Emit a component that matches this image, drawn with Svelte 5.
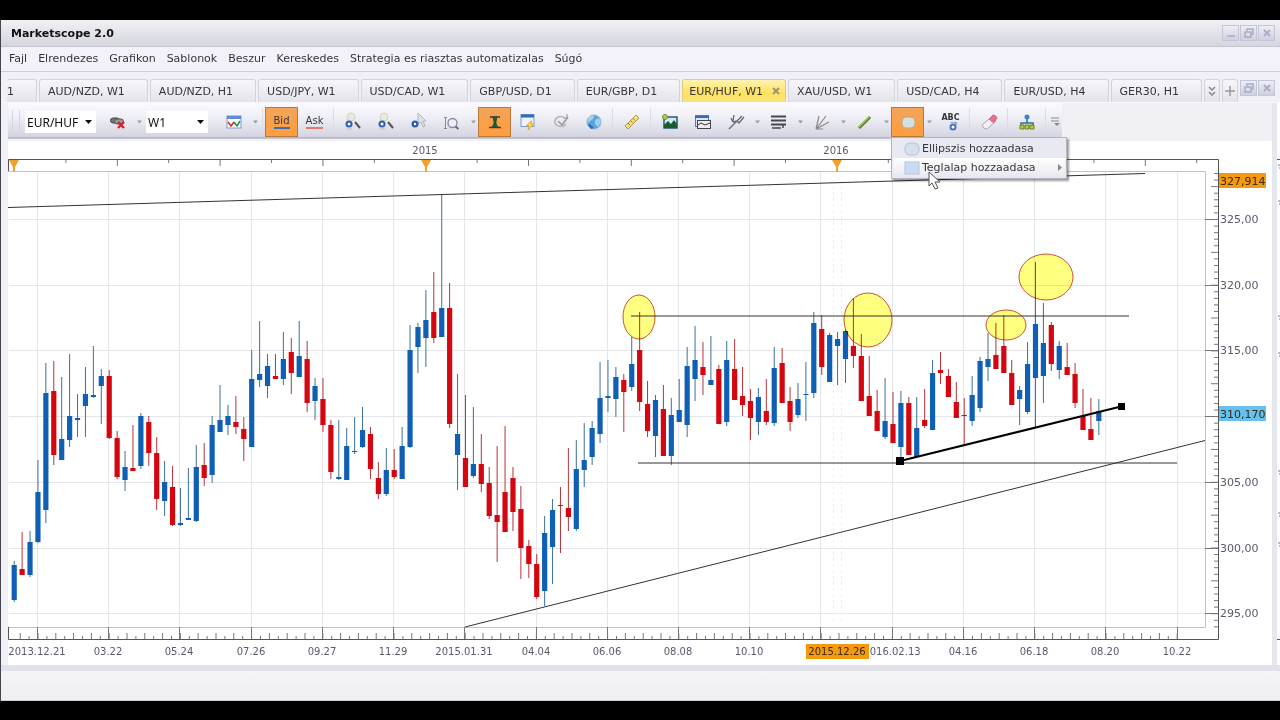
<script>
	let symbol = $state('EUR/HUF');
	let period = $state('W1');
	let activeTab = $state('EUR/HUF, W1');

	const menu = ['Fajl', 'Elrendezes', 'Grafikon', 'Sablonok', 'Beszur', 'Kereskedes', 'Strategia es riasztas automatizalas', 'Súgó'];

	const tabs = [
		'AUD/NZD, W1', 'AUD/NZD, H1', 'USD/JPY, W1', 'USD/CAD, W1', 'GBP/USD, D1', 'EUR/GBP, D1',
		'EUR/HUF, W1', 'XAU/USD, W1', 'USD/CAD, H4', 'EUR/USD, H4', 'GER30, H1'
	];

	// icon shapes, all on a 20x20 grid
	const icons = {
		link: '<rect x="2.500" y="6" width="9" height="5" rx="2.500" fill="#777" stroke="#444"/><rect x="6.500" y="7" width="9" height="5" rx="2.500" fill="#999" stroke="#555"/><path d="M10 10l6 6M16 10l-6 6" stroke="#d8202c" stroke-width="2.400"/>',
		chart: '<rect x="3" y="4" width="14" height="12" fill="#fff" stroke="#7d9cc8"/><path d="M3 5.500h14" stroke="#5f8cd0" stroke-width="3"/><path d="M4 10l3 4 3-4" fill="none" stroke="#d22" stroke-width="1.500"/><path d="M10 10l3 4 3-5" fill="none" stroke="#285" stroke-width="1.500"/>',
		zoomA: '<circle cx="8" cy="5" r="4" fill="#ece8d8" stroke="#d4d2cc"/><path d="M12 10l5 6" stroke="#555" stroke-width="2"/><circle cx="6" cy="12" r="3.500" fill="#2f5fae"/><circle cx="6" cy="12" r="1.500" fill="#fff"/><path d="M4 17h5" stroke="#b4c4d4"/>',
		pointer: '<path d="M9 1v11l3-2 2 5 2-1-2-5h3z" fill="#dde2ea" stroke="#b4b4ba"/><circle cx="6" cy="12" r="3.500" fill="#2f5fae"/><circle cx="6" cy="12" r="1.200" fill="#fff"/>',
		range: '<path d="M3.500 5v12M2 5.500h3M2 16.500h3" stroke="#888"/><circle cx="10.500" cy="11" r="4.500" fill="#eef" stroke="#889" stroke-width="1.300"/><path d="M13.500 14.500l3 2.500" stroke="#667" stroke-width="2"/>',
		scale: '<path d="M5 5h10M4 15.500h12" stroke="#532" stroke-width="1.500"/><path d="M8 5h4l-1 4v3l2 3H7l2-3V9z" fill="#2c7a42" stroke="#264f30"/><path d="M10 5v10" stroke="#143"/>',
		windowStar: '<rect x="3" y="2.500" width="13" height="12" fill="#eef4fc" stroke="#7d9cc8"/><path d="M3 4h13" stroke="#2f6cc0" stroke-width="3"/><path d="M13 9l-5 5h3l-1 4 6-6h-3l1-3z" fill="#ffd24a" stroke="#d8962a" stroke-width=".7"/>',
		refresh: '<path d="M15 12a6 5 0 1 1-1-6M16 2v4h-4" fill="none" stroke="#b5b5ba" stroke-width="1.600"/><path d="M7 9l4 4 6-8" fill="none" stroke="#9a9aa0" stroke-width="1.600"/>',
		globe: '<circle cx="10" cy="10" r="7" fill="#5aa5dc" stroke="#8ab4d6"/><path d="M4 6c2-3 5-3 6-2l-1 3-3 2-2 2zM11 8l4-2 2 4-3 5-3-3z" fill="#a5d0ea"/><path d="M6 12l4 4-3 1-3-4z" fill="#2c6eb8"/>',
		ruler: '<path d="M3 14L14 3l3 3L6 17z" fill="#f5dc7c" stroke="#b39b51"/><path d="M6 11l2 2M8.500 8.500l2 2M11 6.500l2 2" stroke="#93732b"/>',
		picture: '<rect x="4" y="5" width="13" height="11" fill="#cfeaf8" stroke="#1c4e6b" stroke-width="1.400"/><path d="M4 13l4-4 3 3 3-4 3 4v4H4z" fill="#1b5c2d"/><circle cx="5" cy="5" r="2.500" fill="#b5c64c" stroke="#7a902b"/>',
		windows: '<rect x="2.500" y="3.500" width="13" height="11" fill="#dce8fa" stroke="#5377b8"/><path d="M2 5h14" stroke="#3b67b8" stroke-width="2"/><rect x="4.500" y="8.500" width="13" height="8" fill="#eee" stroke="#445"/><path d="M5 13l3-2 4 2 5-2" fill="none" stroke="#334"/>',
		fork: '<path d="M3 17l8-8M5 6l2 4 4-1 5-5M8 3l-1 6M11 9l2 2 5-6" fill="none" stroke="#667" stroke-width="1.300"/>',
		lines: '<path d="M2 4.500h15M2 8.500h15M2 12.500h15" stroke="#454850" stroke-width="2"/><path d="M3 16h9M14 16V12" stroke="#454850" stroke-width="1.500"/>',
		fan: '<path d="M4 17L7 4M4 17L14 4M4 17l13-7M4 17h7" fill="none" stroke="#888" stroke-width="1.200"/>',
		line: '<path d="M4 16L15 5" stroke="#587a2b" stroke-width="3"/><path d="M4 15L14 5" stroke="#a9d046" stroke-width="1.200"/>',
		ellipse: '<rect x="4" y="5" width="13" height="11" rx="4.500" fill="#d5e0dc" stroke="#b6a98c"/>',
		eraser: '<path d="M3 13l7-6 5 4-7 6q-3 1-5-4z" fill="#f3f1f5" stroke="#aaa"/><path d="M10 7l4-4q3 0 4 3l-3 5z" fill="#e8708c" stroke="#d0708a"/>',
		tree: '<path d="M10 6v5M4 15v-4h12v4" fill="none" stroke="#2d6f9e" stroke-width="1.500"/><circle cx="10" cy="5" r="2.500" fill="#3785c7"/><path d="M3 13h4v4H3zM8 13h4v4H8zM13 13h4v4h-4z" fill="#b7cc35" stroke="#64822a"/>'
	};

	// icon name, '>' for a drop arrow, '|' for a separator
	const tools = [
		'chart', '>', '|', 'bid', 'ask', '|', 'zoomA', 'zoomA', 'pointer', 'range', '>', 'scale', 'windowStar',
		'refresh', 'globe', '|', 'ruler', '|', 'picture', 'windows', 'fork', '>', 'lines', '>', 'fan', '>',
		'line', '>', 'ellipse', '>', 'text', '|', 'eraser', '|', 'tree', '|'
	];

	const STEP = 7.917;
	const candleX = (i) => 14.2 + i * STEP;

	// high, body top, body bottom, low, u = rising / d = falling
	const candles = `561 565 600 602 u|532 569 575 575 d|531 542 575 577 u|460 492 542 543 u|363 393 510 523 u|361 391 455 465 d
377 439 460 460 u|354 416 440 447 u|394 418 420 437 u|367 394 406 437 u|346 395 397 398 u|369 376 386 424 u|370 376 438 439 d
431 438 477 479 d|451 467 480 491 u|425 468 471 471 d|413 416 466 469 u|416 422 453 466 d|437 453 499 510 d|461 482 501 516 u
466 487 525 526 d|488 523 525 526 u|468 518 520 520 u|445 467 521 522 u|443 465 478 486 d|416 425 475 483 u|385 420 432 432 u
405 416 425 435 u|396 422 427 434 d|417 429 439 461 d|350 379 447 447 u|321 374 380 387 u|354 366 386 398 u|354 376 379 379 d
332 359 379 385 u|338 352 373 394 d|321 356 377 377 u|341 359 403 412 d|378 386 401 420 u|378 399 425 432 d|420 425 472 479 d
420 477 479 480 u|428 446 480 480 u|417 451 452 454 u|407 430 447 448 u|427 434 469 479 d|462 478 494 499 d|448 470 494 496 u
449 470 477 479 d|427 446 479 479 u|325 350 447 448 u|323 327 347 373 u|290 320 338 367 u|272 312 338 343 d|194 308 337 337 u
283 308 424 428 d|374 434 455 490 u|395 458 487 487 d|407 464 476 478 u|434 464 484 492 d|467 483 516 519 d|446 515 522 562 d
426 492 532 532 d|467 478 512 531 d|486 509 548 579 d|540 546 564 578 d|554 564 597 599 d|516 533 591 606 u|499 510 547 584 u
487 505 506 553 d|448 508 517 531 d|440 469 529 531 u|423 460 470 487 u|421 428 457 465 u|362 398 434 443 u|360 396 398 412 u
367 377 399 417 u|374 380 392 432 d|337 364 387 391 u|312 350 402 411 d|381 404 431 437 d|395 400 436 457 u|385 409 456 456 d
398 415 456 465 u|379 410 422 422 u|347 366 425 437 u|326 360 379 401 u|342 367 375 395 d|336 380 385 385 u|365 369 424 424 d
341 360 422 426 u|339 369 400 400 d|367 396 405 416 d|389 401 418 440 d|388 397 422 435 u|379 411 422 425 d|347 368 423 426 u
348 363 403 403 d|387 401 422 431 d|383 399 415 418 u|362 394 395 421 u|312 323 393 398 u|315 329 367 375 d|333 335 382 382 u
332 339 346 385 u|330 331 359 383 u|298 346 356 368 d|334 356 401 401 d|356 396 416 416 d|390 411 431 431 d|378 421 437 439 u
392 424 443 443 d|391 403 447 461 u|397 403 455 455 d|397 428 457 457 u|389 420 426 428 d|360 373 430 430 u|352 370 373 384 d
369 376 397 397 d|382 402 418 418 d|398 415 416 446 d|376 395 421 426 u|357 361 408 412 u|333 359 367 381 u|323 355 369 369 d
315 346 373 373 d|360 373 405 405 d|386 390 399 425 u|342 364 412 414 u|262 324 378 428 u|303 343 376 403 u|322 325 364 371 d
341 346 370 379 u|343 367 375 375 d|363 374 403 408 d|389 416 430 430 d|398 429 440 440 d|399 411 421 435 u`
		.split(/[|\n]/)
		.map((row, i) => {
			const [high, top, bottom, low, dir] = row.split(' ');
			return { x: candleX(i), high: +high, top: +top, bottom: +bottom, low: +low, up: dir === 'u' };
		});

	const dates = ['2013.12.21', '03.22', '05.24', '07.26', '09.27', '11.29', '2015.01.31', '04.04', '06.06', '08.08', '10.10', '', '2016.02.13', '04.16', '06.18', '08.20', '10.22']
		.map((label, i) => ({ label, x: Math.floor(37.5 + i * 71.22) }));
	const prices = [325, 320, 315, 310, 305, 300, 295];
	const priceY = (p) => Math.floor(219.5 + (325 - p) * 13.14);

	const bottomTicks = Array.from({ length: 132 }, (_, i) => ({ x: 11.3 + i * 8.9, h: i % 2 ? 6 : 3 }));
	const rightTicks = Array.from({ length: 70 }, (_, i) => ({ y: 173.5 + i * 6.57, w: (i + 3) % 5 === 0 ? 7 : 4 }));
	const topTicks = Array.from({ length: 24 }, (_, i) => ({ x: 14.5 + i * 51.4, h: i % 2 ? 3 : 6 }));

	const ellipses = [[639, 317, 16, 22], [868, 320, 24, 27], [1006, 325, 20, 15], [1046, 277, 27, 23]];
	const scraps = [24, 60, 175, 212, 330, 372, 402];
</script>

{#snippet winIcon(kind)}
	<svg width="14" height="12" viewBox="0 0 14 12" fill="none" stroke="#a9acc6" stroke-width="1.5">
		{#if kind === 'min'}
			<path d="M3 9h8" />
		{:else if kind === 'restore'}
			<path d="M5 4V2h6v5H9M3 5h6v5H3z" />
		{:else}
			<path d="M4 3l6 6M10 3l-6 6" stroke-width="2" />
		{/if}
	</svg>
{/snippet}

{#snippet arrow()}
	<svg class="arrow" width="7" height="4" viewBox="0 0 7 4"><path d="M0 0h7L3.500 4z" fill="currentColor" /></svg>
{/snippet}

<div class="app">
	<header class="titlebar">
		<h1>Marketscope 2.0</h1>
		<div class="winbuttons">
			{#each ['min', 'restore', 'close'] as kind}
				<button aria-label={kind}>{@render winIcon(kind)}</button>
			{/each}
		</div>
	</header>

	<nav class="menubar">
		{#each menu as item}
			<button>{item}</button>
		{/each}
	</nav>

	<div class="tabs">
		<button class="tab first">1</button>
		{#each tabs as tab}
			<button class="tab" class:active={tab === activeTab} onclick={() => (activeTab = tab)}>
				{tab}
				{#if tab === activeTab}
					<svg width="8" height="8" viewBox="0 0 8 8"><path d="M1 1l6 6M7 1L1 7" stroke="#9a9478" stroke-width="2" /></svg>
				{/if}
			</button>
		{/each}
		<button class="tab small" aria-label="More tabs">
			<svg width="8" height="10" viewBox="0 0 8 10" fill="none" stroke="#888"><path d="M1 1l3 3 3-3M1 6l3 3 3-3" stroke-width="1.500" /></svg>
		</button>
		<button class="tab small" aria-label="New tab">
			<svg width="10" height="10" viewBox="0 0 10 10"><path d="M5 0v10M0 5h10" stroke="#999" stroke-width="1.500" /></svg>
		</button>
		<div class="winbuttons docked">
			<button aria-label="restore chart">{@render winIcon('restore')}</button>
			<button aria-label="close chart">{@render winIcon('close')}</button>
		</div>
	</div>

	<div class="workspace">
		<main>
			<div class="toolbar">
				<span class="grip"></span>
				<label class="combo symbol">
					<select bind:value={symbol} aria-label="Symbol"><option>EUR/HUF</option><option>EUR/USD</option></select>
					{@render arrow()}
				</label>
				<button class="tool" aria-label="link"><svg width="20" height="20" viewBox="0 0 20 20">{@html icons.link}</svg></button>
				<button class="drop" aria-label="link options">{@render arrow()}</button>
				<label class="combo period">
					<select bind:value={period} aria-label="Period"><option>W1</option><option>D1</option><option>H4</option></select>
					{@render arrow()}
				</label>

				{#each tools as tool}
					{#if tool === '|'}
						<span class="sep"></span>
					{:else if tool === '>'}
						<button class="drop" aria-label="options">{@render arrow()}</button>
					{:else if tool === 'bid'}
						<button class="tool on quote"><span class="blue">Bid</span></button>
					{:else if tool === 'ask'}
						<button class="tool quote"><span class="red">Ask</span></button>
					{:else if tool === 'text'}
						<button class="tool abc" aria-label="label">
							<b>ABC</b>
							<svg width="12" height="9" viewBox="0 0 12 9"><circle cx="8" cy="5" r="2.500" fill="#fff" stroke="#4675bd" stroke-width="2" /><path d="M5 0h6v3" stroke="#4675bd" fill="none" /></svg>
						</button>
					{:else if tool === 'ellipse'}
						<div class="with-menu">
							<button class="tool on" aria-label="shapes"><svg width="20" height="20" viewBox="0 0 20 20">{@html icons.ellipse}</svg></button>
							<div class="popup">
								<button>
									<svg width="16" height="14" viewBox="0 0 16 14"><rect x="1" y="1" width="14" height="12" rx="5" fill="#d5e0ee" stroke="#b4c2d4" /></svg>
									Ellipszis hozzaadasa
								</button>
								<button class="hover">
									<svg width="16" height="14" viewBox="0 0 16 14"><rect x="1" y="1" width="14" height="12" fill="#cbdcf2" stroke="#b4c6e0" /></svg>
									Teglalap hozzaadasa
									<svg class="sub" width="4" height="7" viewBox="0 0 4 7"><path d="M0 0l4 3.500L0 7z" fill="#888" /></svg>
								</button>
								<svg class="cursor" width="14" height="20" viewBox="0 0 14 20"><path d="M1 1v14l3-3 3 6 3-1-3-6h5z" fill="#fff" stroke="#555" /></svg>
							</div>
						</div>
					{:else}
						<button class="tool" class:on={tool === 'scale'} aria-label={tool}>
							<svg width="20" height="20" viewBox="0 0 20 20">{@html icons[tool]}</svg>
						</button>
					{/if}
				{/each}
				<button class="overflow" aria-label="more tools">
					<svg width="9" height="10" viewBox="0 0 9 10"><path d="M0 1h8M0 4h8" stroke="#888" /><path d="M3 6h6L6 9z" fill="#888" /></svg>
				</button>
			</div>

			<svg class="chart" viewBox="8 141 1264 524" role="img" aria-label="EUR/HUF, W1">
				<g class="grid">
					{#each dates as d}<path d="M{d.x}.5 172V627" />{/each}
					{#each prices as p}<path d="M9 {priceY(p)}.5H1205" />{/each}
				</g>
				<path d="M833.5 180V622M841.5 180V622" stroke="#eeeef0" stroke-dasharray="3 3" />

				<!-- plot frame and rulers -->
				<path class="frame" d="M8 171.500H1205.500V627.500H8" />
				<path class="ruler" d="M8.500 171V159.500H1218.500V639.500H8.500V627" />
				<g class="ticks">
					{#each topTicks as t}<path d="M{t.x} 160v{t.h}" />{/each}
					{#each bottomTicks.slice(1) as t}<path d="M{t.x} 639v-{t.h}" />{/each}
					{#each rightTicks as t}<path d="M1218 {t.y}h-{t.w}" />{/each}
					{#each dates as d}<path d="M{d.x}.5 627v12" />{/each}
					{#each prices as p}<path d="M1205 {priceY(p)}.5h13" />{/each}
				</g>
				{#each [14, 426, 837] as x}
					<path d="M{x - 5} 160h10l-4 7v5h-2v-5z" fill="#f0a030" />
				{/each}

				{#each candles as c}
					<g class={c.up ? 'up' : 'down'}>
						<path d="M{c.x} {c.high}V{c.low}" />
						<rect x={c.x - 2.6} y={c.top} width="5.2" height={c.bottom - c.top} />
					</g>
				{/each}

				{#each ellipses as [cx, cy, rx, ry]}
					<ellipse {cx} {cy} {rx} {ry} />
				{/each}

				<g class="trend">
					<path d="M8 207.500L1145 173.500" />
					<path d="M631 316H1129" />
					<path d="M638 463H1177" />
					<path d="M465 627L1205 440.500" />
					<path class="thick" d="M900 461L1121 406.500" />
				</g>
				<path d="M896 457h8v8h-8zM1118 403h7v7h-7z" />

				<g class="labels">
					<text x="425" y="154" text-anchor="middle">2015</text>
					<text x="836" y="154" text-anchor="middle">2016</text>
					{#each dates as d}<text x={d.x} y="655" text-anchor="middle">{d.label}</text>{/each}
					{#each prices.filter((p) => p !== 310) as p}<text class="price" x="1220" y={priceY(p) + 4}>{p},00</text>{/each}
				</g>
				<rect x="806" y="644" width="63" height="15" fill="#f59a0c" />
				<text class="mark" x="837" y="655" text-anchor="middle">2015.12.26</text>
				<rect x="1219" y="173" width="47" height="15" fill="#f59a0c" />
				<text class="mark price" x="1220" y="185">327,914</text>
				<rect x="1219" y="406" width="47" height="15" fill="#66c1ee" />
				<text class="mark price" x="1220" y="418">310,170</text>
			</svg>
		</main>

		<aside>
			<svg width="3" height="524" viewBox="0 0 3 524">
				<path d="M0 18.500h3M0 498.500h3" stroke="#555" />
				{#each scraps as y}<path d="M1 {y}h2M2 {y + 3}h1" stroke="#777" />{/each}
			</svg>
		</aside>
	</div>

	<footer></footer>
</div>

<style>
	:global(body) {
		background: #000;
		font-family: "DejaVu Sans", Verdana, sans-serif;
		font-size: 11px;
		color: #35353d;
	}

	button, select {
		font: inherit;
		color: inherit;
		border: 0;
		padding: 0;
		background: none;
	}

	.app {
		margin: 20px 0;
		border-left: 1px solid #45454f;
		background: #f0f0f7;
	}

	.titlebar {
		display: flex;
		align-items: center;
		height: 26px;
		padding: 0 5px 0 10px;
		border-bottom: 1px solid #c6c6cf;
		background: linear-gradient(#f1f1f5, #e3e3e9 50%, #d6d6df);
	}

	h1 {
		margin: 0;
		flex: 1;
		font-size: 11px;
		color: #111;
	}

	.winbuttons {
		display: flex;
		gap: 1px;
	}

	.winbuttons button {
		display: grid;
		place-items: center;
		width: 17px;
		height: 16px;
		border: 1px solid #c3c5d9;
		background: linear-gradient(#eeeef5, #cfd0e0);
	}

	.menubar {
		display: flex;
		gap: 11px;
		height: 22px;
		padding: 0 0 2px 8px;
		border-bottom: 1px solid #cdcdd4;
		background: #f3f2fa;
	}

	.tabs {
		display: flex;
		align-items: flex-end;
		gap: 2px;
		height: 30px;
		padding: 0 5px 0 6px;
		border-bottom: 1px solid #f8f8fc;
	}

	.tab {
		display: flex;
		align-items: center;
		justify-content: space-between;
		height: 23px;
		padding: 0 22px 0 8px;
		white-space: nowrap;
		border: 1px solid #d3d3dd;
		border-bottom: 0;
		border-radius: 3px 3px 0 0;
		background: linear-gradient(#f6f6fb, #e3e3ea);
	}

	.tab.first {
		flex: none;
		width: 30px;
		padding: 0;
		border-left: 0;
	}

	.tab.active {
		gap: 9px;
		padding: 0 5px 0 6px;
		border-color: #e3cd79;
		background: linear-gradient(#fff3b4, #ffe25f 60%, #fde27c);
	}

	.tab.small {
		width: 20px;
		padding: 0;
		justify-content: center;
	}

	.docked {
		align-self: flex-start;
		margin-left: auto;
		padding-top: 8px;
	}

	.workspace {
		display: flex;
	}

	main {
		flex: 1;
		min-width: 0;
		margin-left: 7px;
		background: #fff;
	}

	.toolbar {
		display: flex;
		align-items: center;
		height: 38px;
		background: linear-gradient(90deg, transparent 1054px, #f0f0f5 1054px),
			linear-gradient(#fbfbfe, #eeeef5 40%, #d5d5e2 88%, #adadbd 92%, #f0f0f6 96%);
	}

	.grip {
		width: 6px;
		height: 24px;
		margin: 0 5px 0 4px;
		border-left: 1px solid #d6d6de;
		border-right: 1px solid #d6d6de;
	}

	.combo {
		display: grid;
		align-items: center;
		height: 22px;
		background: #fff;
		color: #111;
		font-family: "Noto Sans", "Open Sans", sans-serif;
		font-size: 12px;
	}

	.combo select {
		grid-area: 1 / 1;
		width: 100%;
		padding-left: 2px;
		appearance: none;
		outline: 0;
	}

	.combo .arrow {
		grid-area: 1 / 1;
		justify-self: end;
		margin-right: 4px;
		pointer-events: none;
	}

	.symbol {
		width: 71px;
		margin-right: 5px;
	}

	.period {
		width: 62px;
		margin: 0 9px 0 2px;
	}

	.tool, .drop, .overflow {
		display: grid;
		place-items: center;
		flex: none;
		height: 30px;
	}

	.tool {
		width: 33px;
	}

	.drop {
		width: 10px;
		color: #9a9aa6;
	}

	.drop .arrow {
		width: 5px;
	}

	.overflow {
		width: 15px;
	}

	.tool.on {
		border: 1px solid #b5793a;
		background: linear-gradient(#f3a459, #ff9d3f);
	}

	.quote {
		font-size: 10px;
	}

	.quote span {
		line-height: 12px;
		border-bottom: 2px solid #3d6fae;
	}

	.quote .red {
		border-color: #e07a70;
	}

	.abc {
		align-content: center;
		font-size: 8px;
		line-height: 8px;
	}

	.sep {
		width: 1px;
		height: 28px;
		margin: 0 2px;
		background: #dcdce6;
	}

	.with-menu {
		position: relative;
	}

	.popup {
		position: absolute;
		top: 30px;
		left: 0;
		z-index: 2;
		width: max-content;
		padding: 1px;
		border: 1px solid #b4b4c0;
		background: #e9e9f1;
		box-shadow: 2px 2px 2px rgba(0, 0, 0, 0.4);
	}

	.popup button {
		display: flex;
		align-items: center;
		gap: 2px;
		width: 100%;
		height: 19px;
		padding: 0 3px 0 11px;
		min-width: 172px;
	}

	.popup .hover {
		background: linear-gradient(#fff, #e8e8f0);
	}

	.sub {
		margin-left: auto;
	}

	.cursor {
		position: absolute;
		left: 36px;
		top: 33px;
	}

	.chart {
		display: block;
		width: 100%;
	}

	.grid path {
		stroke: #e6e6ea;
	}

	.frame {
		fill: none;
		stroke: #bfc3c8;
	}

	.ruler {
		fill: none;
		stroke: #555;
	}

	.ticks path {
		stroke: #777;
	}

	.up {
		fill: #0f60b4;
	}

	.down {
		fill: #d4060f;
	}

	.up path {
		stroke: #3c7199;
	}

	.down path {
		stroke: #b5343c;
	}

	ellipse {
		fill: #ffff80;
		stroke: #cc5030;
		mix-blend-mode: multiply;
	}

	.trend path {
		stroke: #333;
	}

	.trend .thick {
		stroke: #000;
		stroke-width: 2;
	}

	.chart text {
		font-size: 10px;
	}

	.labels {
		fill: #5a5a6c;
	}

	.chart .price {
		font-size: 11px;
	}

	.mark {
		fill: #3a2a12;
	}

	aside {
		width: 3px;
		padding-top: 38px;
		border-left: 5px solid #e6e6ef;
		background: #fff;
	}

	aside svg {
		display: block;
	}

	footer {
		height: 29px;
		border-top: 6px solid #e2e2ea;
		border-bottom: 1px solid #cfcfd4;
		background: linear-gradient(#f5f5f8, #efeff3);
	}
</style>
